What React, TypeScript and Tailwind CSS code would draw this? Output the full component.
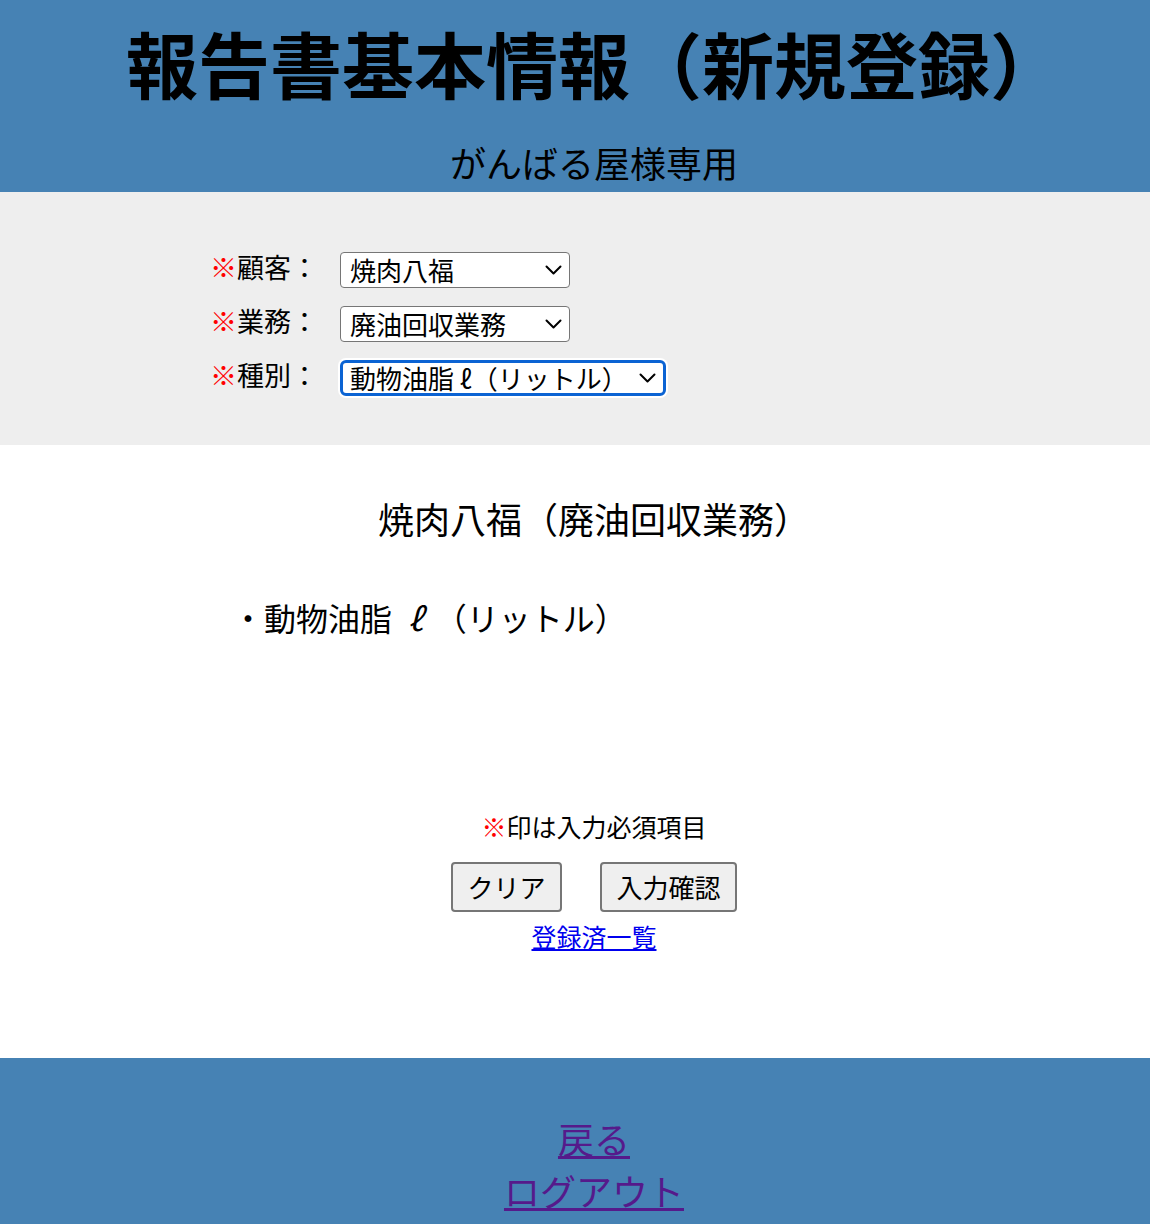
const font = { fontFamily: '"Noto Sans CJK JP", "Noto Sans", sans-serif' }

interface Field {
  label: string
  value: string
  width: string
  focused?: boolean
}

const fields: Field[] = [
  { label: "顧客", value: "焼肉八福", width: "w-[230px]" },
  { label: "業務", value: "廃油回収業務", width: "w-[230px]" },
  { label: "種別", value: "動物油脂 ℓ（リットル）", width: "w-[326px]", focused: true },
]

function Chevron() {
  return (
    <svg className="absolute right-[7px] top-1/2 -translate-y-1/2" width="17" height="10" viewBox="0 0 17 10" fill="none">
      <polyline points="1.5,1.5 8.5,8.5 15.5,1.5" stroke="black" strokeWidth="2" strokeLinecap="round" strokeLinejoin="round" />
    </svg>
  )
}

function FakeSelect({ field }: { field: Field }) {
  return (
    <div
      className={
        field.focused
          ? `relative ${field.width} h-9 rounded-[6px] border-[3px] border-[#0b63d3] bg-white ring-2 ring-white flex items-center pl-[7px]`
          : `relative ${field.width} h-9 rounded-[4px] border border-[#767676] bg-white flex items-center pl-[9px]`
      }
    >
      <span className="text-[26px] leading-none text-black whitespace-nowrap">{field.value}</span>
      <Chevron />
    </div>
  )
}

export default function App() {
  return (
    <div className="w-[1150px] min-h-[1224px] bg-white text-black [text-spacing-trim:space-all]" style={font}>
      {/* Header */}
      <header className="h-[192px] bg-[#4682b4] flex flex-col items-center pt-[26px] pl-[38px]">
        <h1 className="text-[72px] font-bold leading-none whitespace-nowrap">報告書基本情報（新規登録）</h1>
        <p className="mt-[46px] text-[36px] leading-none">がんばる屋様専用</p>
      </header>

      {/* Form */}
      <section className="h-[253px] bg-[#eeeeee] pt-[60px] pl-[210px] flex flex-col gap-[18px]">
        {fields.map(f => (
          <div key={f.label} className="flex items-center">
            <div className="w-[130px] text-[27px] leading-none -mt-2 whitespace-nowrap">
              <span className="text-[#ff0000]">※</span>
              {f.label}：
            </div>
            <FakeSelect field={f} />
          </div>
        ))}
      </section>

      {/* Content */}
      <main className="h-[613px] flex flex-col">
        <h2 className="mt-[55px] pl-[38px] text-center text-[36px] leading-none font-normal">焼肉八福（廃油回収業務）</h2>
        <ul className="mt-[65px] pl-[232px] text-[32px] leading-none">
          <li className="flex items-baseline whitespace-nowrap">
            <span>・動物油脂</span>
            <span className="ml-[16px] mr-[12px] italic leading-none">ℓ</span>
            <span>（リットル）</span>
          </li>
        </ul>

        <p className="mt-[181px] pl-[38px] text-center text-[25px] leading-none">
          <span className="text-[#ff0000]">※</span>印は入力必須項目
        </p>
        <div className="mt-[23px] pl-[38px] flex justify-center gap-[38px]">
          <button className="w-[111px] h-[50px] rounded-[4px] border-2 border-[#767676] bg-[#efefef] text-[26px] leading-none">
            クリア
          </button>
          <button className="w-[137px] h-[50px] rounded-[4px] border-2 border-[#767676] bg-[#efefef] text-[26px] leading-none">
            入力確認
          </button>
        </div>
        <div className="mt-[12px] pl-[38px] text-center">
          <a href="#" className="text-[25px] leading-none text-[#0000ee] underline">登録済一覧</a>
        </div>
      </main>

      {/* Footer */}
      <footer className="h-[166px] bg-[#4682b4] flex flex-col items-center pt-[62px] pl-[38px] gap-[16px]">
        <a href="#" className="text-[36px] leading-none text-[#551a8b] underline">戻る</a>
        <a href="#" className="text-[36px] leading-none text-[#551a8b] underline">ログアウト</a>
      </footer>
    </div>
  )
}
